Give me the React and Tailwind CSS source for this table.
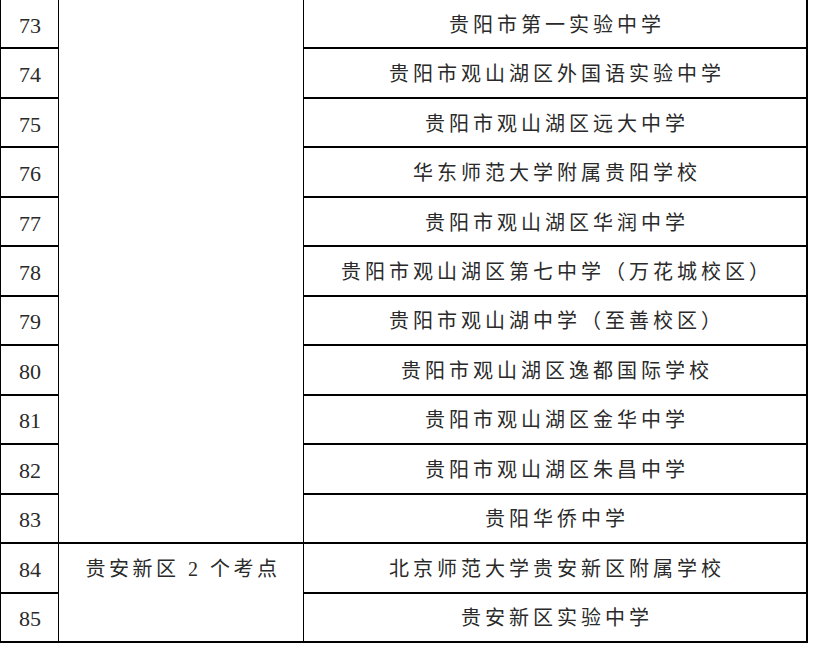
const rows = [
  { no: 73, school: "贵阳市第一实验中学" },
  { no: 74, school: "贵阳市观山湖区外国语实验中学" },
  { no: 75, school: "贵阳市观山湖区远大中学" },
  { no: 76, school: "华东师范大学附属贵阳学校" },
  { no: 77, school: "贵阳市观山湖区华润中学" },
  { no: 78, school: "贵阳市观山湖区第七中学（万花城校区）" },
  { no: 79, school: "贵阳市观山湖中学（至善校区）" },
  { no: 80, school: "贵阳市观山湖区逸都国际学校" },
  { no: 81, school: "贵阳市观山湖区金华中学" },
  { no: 82, school: "贵阳市观山湖区朱昌中学" },
  { no: 83, school: "贵阳华侨中学" },
  { no: 84, school: "北京师范大学贵安新区附属学校" },
  { no: 85, school: "贵安新区实验中学" },
];

const font = { fontFamily: '"Liberation Serif", "Noto Sans CJK SC", serif' };

export default function App() {
  return (
    <div className="min-h-[646px] bg-white text-[#2a2a2a]" style={font}>
      <div className="grid h-[643px] w-[808px] grid-cols-[58px_245px_502px] grid-rows-[repeat(13,minmax(0,1fr))] border-r-2 border-l border-black">
        {rows.map((row, i) => (
          <div
            key={`no-${row.no}`}
            className="col-start-1 flex items-center justify-center border-r border-b-2 border-black pt-[3px] pl-[1px] text-[22px]"
            style={{ gridRowStart: i + 1 }}
          >
            {row.no}
          </div>
        ))}

        <div className="col-start-2 row-start-1 row-span-11 border-r border-b-2 border-black" />
        <div className="col-start-2 row-start-12 row-span-2 flex flex-col border-r border-b-2 border-black">
          <div className="flex h-[48px] items-center justify-center pt-[2px] pl-[4px] text-[20px] tracking-[3.5px]">
            贵安新区 2 个考点
          </div>
        </div>

        {rows.map((row, i) => (
          <div
            key={`school-${row.no}`}
            className="col-start-3 flex items-center justify-center border-b-2 border-black pt-[2px] pl-[4px] text-[20px] tracking-[4px]"
            style={{ gridRowStart: i + 1 }}
          >
            {row.school}
          </div>
        ))}
      </div>
    </div>
  );
}
